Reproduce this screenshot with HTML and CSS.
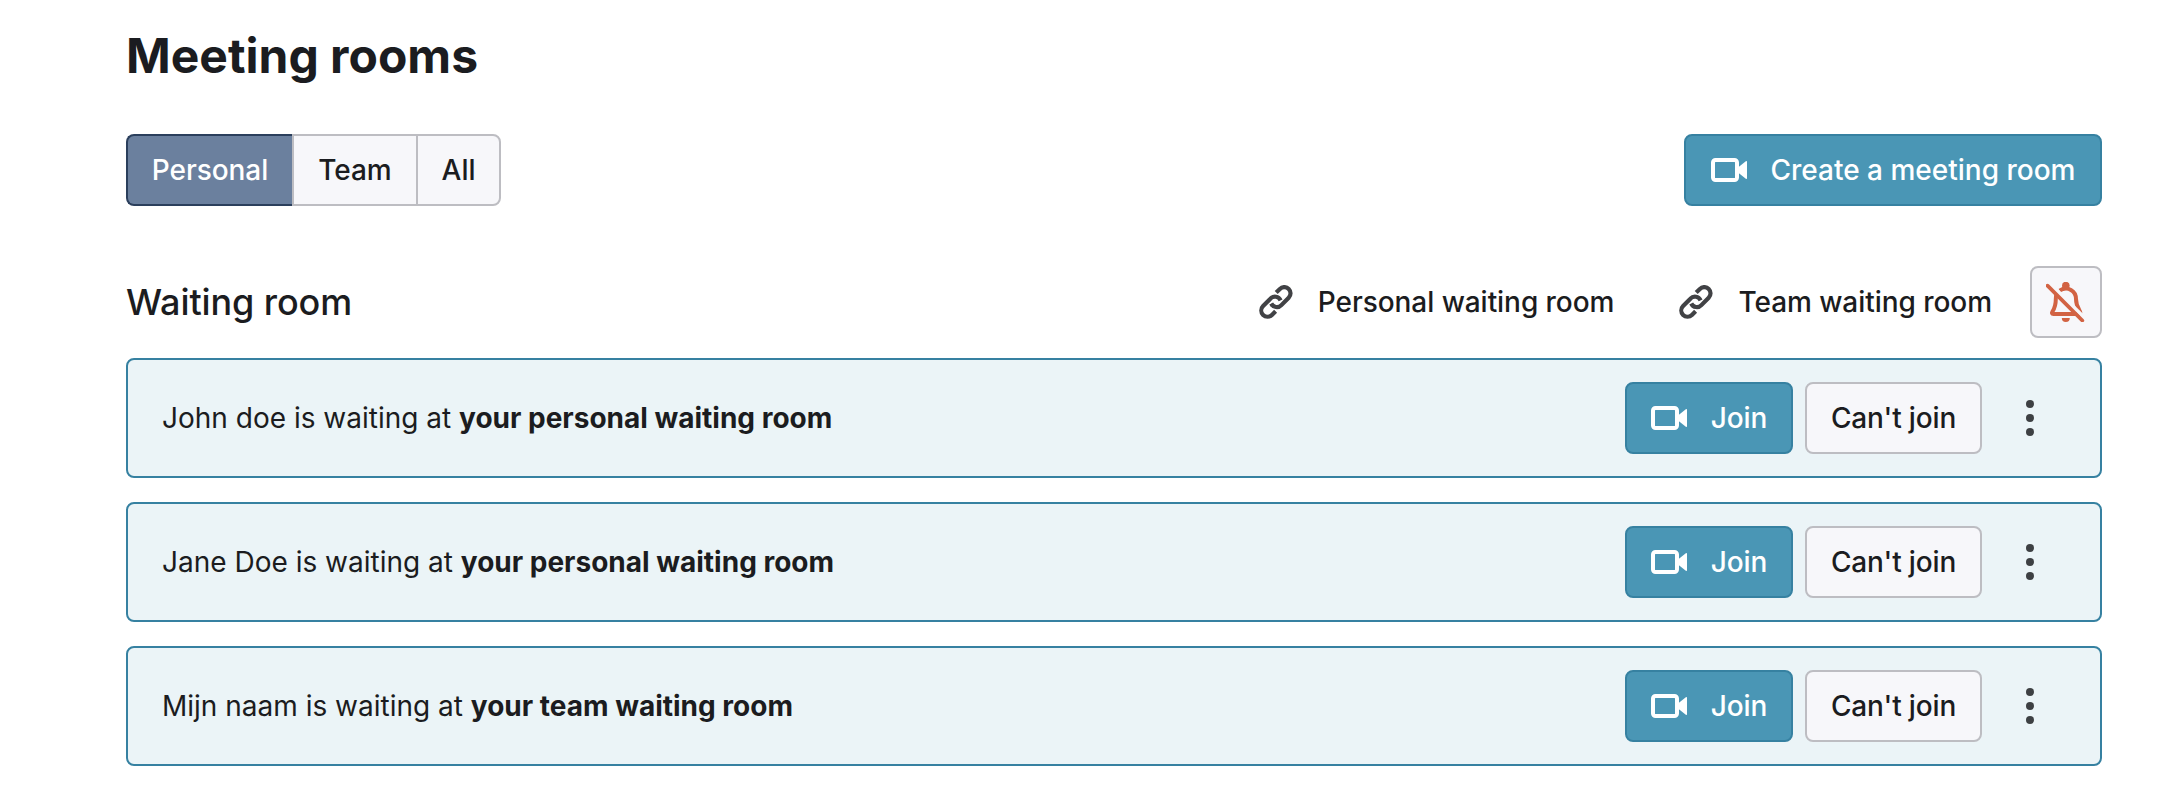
FILE: index.html
```html
<!DOCTYPE html>
<html lang="en">
<head>
  <meta charset="UTF-8">
  <meta name="viewport" content="width=device-width, initial-scale=1.0">
  <title>Meeting rooms</title>
  <link rel="stylesheet" href="styles.css">
</head>
<body>
  <!-- shared icons -->
  <svg class="sprite" width="0" height="0">
    <symbol id="icon-video" viewBox="0 0 36 24">
      <rect x="2" y="2" width="24" height="20" rx="2.5" fill="none" stroke="currentColor" stroke-width="4"/>
      <path d="M27 9.5L34.8 3.2Q36 2.4 36 4V20Q36 21.6 34.8 20.8L27 14.5Z" fill="currentColor"/>
    </symbol>
    <symbol id="icon-link" viewBox="0 0 34 34">
      <g fill="none" stroke="currentColor" stroke-width="4.2">
        <path d="M17.2 7.6L20.9 3.9A6.2 6.2 0 0 1 29.7 12.7L22.4 20.1A6.2 6.2 0 0 1 12.2 18.5"/>
        <path d="M16.6 26.2L12.9 29.9A6.2 6.2 0 0 1 4.1 21.1L11.4 13.7A6.2 6.2 0 0 1 21.6 15.3"/>
      </g>
    </symbol>
    <symbol id="icon-bell-off" viewBox="0 0 40 40">
      <circle cx="19.8" cy="3.6" r="3.8" fill="currentColor"/>
      <path d="M13.5 8.6C22 3.6 30 9 30 17C30 23 32 26 34 29.5Q35 32 33 32H7.5Q5 32 6.5 29.5C8.5 26.5 9.8 23 9.8 17C9.8 14.5 10 13 10.5 12" fill="none" stroke="currentColor" stroke-width="4"/>
      <path d="M15.8 36H23.8A4 4 0 0 1 15.8 36Z" fill="currentColor"/>
      <path d="M3.8 1.2L40.8 38.2" class="bell-gap"/>
      <path d="M1.5 3.7L36.3 38.5" stroke="currentColor" stroke-width="3.8" stroke-linecap="round"/>
    </symbol>
    <symbol id="icon-more" viewBox="0 0 8 36">
      <circle cx="4" cy="4" r="4" fill="currentColor"/>
      <circle cx="4" cy="18" r="4" fill="currentColor"/>
      <circle cx="4" cy="32" r="4" fill="currentColor"/>
    </symbol>
  </svg>

  <main class="page">
    <h1>Meeting rooms</h1>

    <div class="toolbar">
      <div class="tabs">
        <button class="tab active">Personal</button>
        <button class="tab">Team</button>
        <button class="tab">All</button>
      </div>
      <button class="btn primary create"><svg class="icon-video"><use href="#icon-video"/></svg>Create a meeting room</button>
    </div>

    <div class="section-header">
      <h2>Waiting room</h2>
      <div class="actions">
        <button class="btn link"><svg class="icon-link"><use href="#icon-link"/></svg>Personal waiting room</button>
        <button class="btn link"><svg class="icon-link"><use href="#icon-link"/></svg>Team waiting room</button>
        <button class="btn square" aria-label="Notifications off"><svg class="icon-bell"><use href="#icon-bell-off"/></svg></button>
      </div>
    </div>

    <div class="waiting-list">
      <div class="card">
        <p>John doe is waiting at <strong>your personal waiting room</strong></p>
        <div class="actions">
          <button class="btn primary join"><svg class="icon-video"><use href="#icon-video"/></svg>Join</button>
          <button class="btn decline">Can't join</button>
          <button class="btn more" aria-label="More"><svg class="icon-more"><use href="#icon-more"/></svg></button>
        </div>
      </div>
      <div class="card">
        <p>Jane Doe is waiting at <strong>your personal waiting room</strong></p>
        <div class="actions">
          <button class="btn primary join"><svg class="icon-video"><use href="#icon-video"/></svg>Join</button>
          <button class="btn decline">Can't join</button>
          <button class="btn more" aria-label="More"><svg class="icon-more"><use href="#icon-more"/></svg></button>
        </div>
      </div>
      <div class="card">
        <p>Mijn naam is waiting at <strong>your team waiting room</strong></p>
        <div class="actions">
          <button class="btn primary join"><svg class="icon-video"><use href="#icon-video"/></svg>Join</button>
          <button class="btn decline">Can't join</button>
          <button class="btn more" aria-label="More"><svg class="icon-more"><use href="#icon-more"/></svg></button>
        </div>
      </div>
    </div>
  </main>
</body>
</html>
```

FILE: styles.css
```css
* {
  box-sizing: border-box;
  margin: 0;
  padding: 0;
}

body {
  background: #fff;
  color: #1b1c20;
  font-family: Inter, "Liberation Sans", sans-serif;
  font-size: 28px;
  overflow: hidden;
}

.sprite {
  display: block;
}

.page {
  padding: 26px 74px 0 126px;
}

h1 {
  font-size: 48px;
  font-weight: 700;
  line-height: 60px;
}

h2 {
  font-size: 36px;
  font-weight: 500;
  letter-spacing: -0.1px;
}

.toolbar,
.section-header,
.card,
.actions,
.tabs {
  display: flex;
  align-items: center;
}

.toolbar,
.section-header,
.card {
  justify-content: space-between;
}

.toolbar {
  margin-top: 48px;
}

.section-header {
  margin-top: 60px;
}

.actions {
  gap: 12px;
}

.btn,
.tab {
  height: 72px;
  padding: 0 24px;
  border: 2px solid #bdbdc2;
  background: #f7f7fa;
  color: #1b1c20;
  font-family: inherit;
  font-size: 28px;
  font-weight: 500;
  letter-spacing: -0.05px;
  white-space: nowrap;
  cursor: pointer;
}

.btn {
  display: flex;
  align-items: center;
  justify-content: center;
  gap: 24px;
  border-radius: 8px;
}

.tab {
  width: 124px;
  padding: 0;
}

.tab:not(:last-child) {
  border-right: none;
}

.tab:first-child {
  width: 166px;
  border-radius: 8px 0 0 8px;
}

.tab:last-child {
  width: 85px;
  border-radius: 0 8px 8px 0;
}

.tab.active {
  border-color: #2b3f5c;
  background: #6b809e;
  color: #fff;
}

.btn.primary {
  border-color: #3681a1;
  background: #4a96b5;
  color: #fff;
}

.btn.create {
  width: 418px;
  padding: 0;
  letter-spacing: 0;
}

.btn.join {
  width: 168px;
  padding: 0;
}

.btn.decline {
  width: 177px;
  padding: 0;
  letter-spacing: -0.15px;
}

.btn.link,
.btn.more {
  border-color: transparent;
  background: none;
}

.btn.square,
.btn.more {
  width: 72px;
  padding: 0;
}

.icon-video {
  width: 36px;
  height: 24px;
}

.icon-link {
  width: 34px;
  height: 34px;
  margin: 0 1px;
  color: #414245;
}

.icon-bell {
  width: 40px;
  height: 40px;
  color: #d26343;
}

.bell-gap {
  stroke: #f7f7fa;
  stroke-width: 3.6;
}

.icon-more {
  width: 8px;
  height: 36px;
  color: #3d4043;
}

.waiting-list {
  display: flex;
  flex-direction: column;
  gap: 24px;
  margin-top: 20px;
}

.card {
  height: 120px;
  padding: 0 34px;
  border: 2px solid #3681a1;
  border-radius: 8px;
  background: #ebf4f7;
}

strong {
  font-weight: 700;
}
```
